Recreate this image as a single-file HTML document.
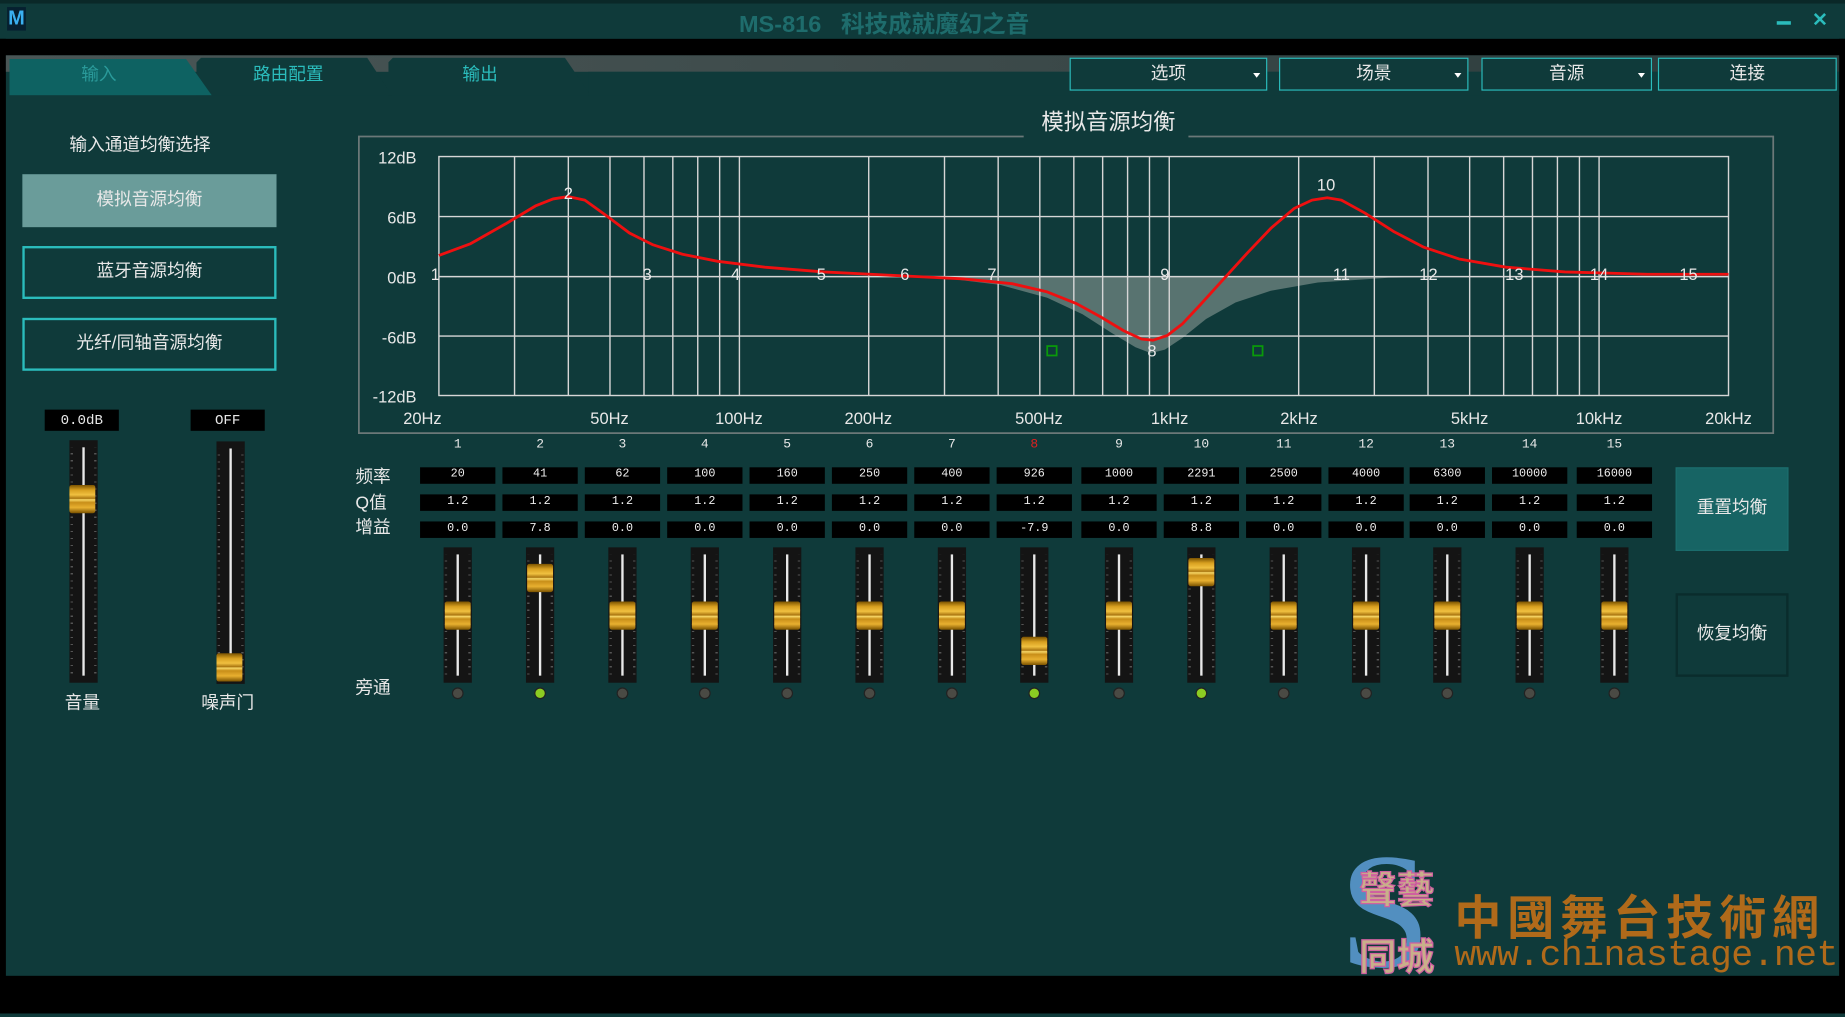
<!DOCTYPE html>
<html><head><meta charset="utf-8">
<style>
html,body{margin:0;padding:0;width:1845px;height:1017px;overflow:hidden;background:#0f3a3a;}
#s{position:absolute;left:0;top:0;width:1568px;height:864px;transform-origin:0 0;transform:scale(1.17666,1.1771);font-family:"Liberation Sans","Noto Sans CJK SC",sans-serif;color:#e8e8e8;}
.a{position:absolute;}
.t{position:absolute;white-space:nowrap;}
.btn{position:absolute;box-sizing:border-box;display:flex;align-items:center;justify-content:center;font-size:15px;padding-bottom:4px;}
.dd{position:absolute;box-sizing:border-box;border:1px solid #2bbcbc;background:#0f3a3a;font-size:15px;display:flex;align-items:center;justify-content:center;top:49px;height:28px;padding-bottom:4px;}
.dd i{position:absolute;right:5px;top:12px;width:0;height:0;border-left:3px solid transparent;border-right:3px solid transparent;border-top:4px solid #fff;}
.col{position:absolute;top:372px;width:70px;height:225px;}
.num{position:absolute;top:0px;width:70px;text-align:center;font:11px "Liberation Mono",monospace;color:#e8e8e8;}
.bx{position:absolute;left:3px;width:64px;height:14px;background:#000;font:10px/14px "Liberation Mono",monospace;text-align:center;color:#eee;}
.tr{position:absolute;left:23px;top:93px;width:24px;height:115px;background:#141414;}
.tr::before,.tr::after{content:"";position:absolute;top:6px;bottom:6px;width:2px;background:repeating-linear-gradient(#141414 0 5px,#555 5px 6px);}
.tr::before{left:1px}.tr::after{right:1px}
.ln{position:absolute;left:11px;top:6px;width:2px;bottom:6px;background:#e8e8e8;}
.kn{position:absolute;left:24px;width:22px;height:24px;border-radius:2px;background:linear-gradient(#7a5200 0%,#d8a020 18%,#f0c040 35%,#a87410 48%,#f8d868 52%,#c88e18 62%,#e8b030 80%,#7a5200 100%);}
.led{position:absolute;left:30px;top:212px;width:10px;height:10px;box-sizing:border-box;border:1px solid #222;border-radius:50%;background:#4a4a44;}
.led.on{background:#8ccc22;}
</style></head><body>
<div id="s">
<div class="a" style="left:0;top:0;width:1568px;height:3px;background:#0a2828"></div>
<div class="a" style="left:0;top:3px;width:1568px;height:30px;background:#0f3a3a"></div>
<div class="t" style="left:6px;top:6px;width:16px;height:20px;background:#062030;color:#3ab0f0;font:bold 17px/20px 'Liberation Sans';text-align:center">M</div>
<div class="t" style="left:628px;top:4px;font-size:20px;font-weight:bold;color:#1e6c6c">MS-816&nbsp;&nbsp;&nbsp;科技成就魔幻之音</div>
<div class="a" style="left:1510px;top:18px;width:12px;height:3px;background:#2bbcbc"></div>
<div class="t" style="left:1540px;top:7px;font-size:16px;font-weight:bold;color:#2bbcbc">✕</div>
<div class="a" style="left:0;top:33px;width:1568px;height:14px;background:#000"></div>
<div class="a" style="left:0;top:33px;width:5px;height:831px;background:#000"></div>
<div class="a" style="left:1563px;top:33px;width:5px;height:831px;background:#000"></div>
<div class="a" style="left:5px;top:47px;width:1558px;height:14px;background:linear-gradient(90deg,#4a5656,#3a4848 60%,#2a3a3a)"></div>
<div class="a" style="left:167px;top:49px;width:166px;height:32px;background:#0f3a3a;clip-path:polygon(4px 0,145px 0,166px 32px,0 32px,0 4px)"></div>
<div class="a" style="left:330px;top:49px;width:172px;height:32px;background:#0f3a3a;clip-path:polygon(4px 0,150px 0,172px 32px,0 32px,0 4px)"></div>
<div class="a" style="left:8px;top:50px;width:172px;height:31px;background:#0e6262;clip-path:polygon(0 0,150px 0,172px 31px,0 31px)"></div>
<div class="a" style="left:500px;top:61px;width:1063px;height:20px;background:#0f3a3a"></div>
<div class="t" style="left:69px;top:52px;font-size:15px;color:#2a9a9a">输入</div>
<div class="t" style="left:215px;top:52px;font-size:15px;color:#2bbcbc">路由配置</div>
<div class="t" style="left:393px;top:52px;font-size:15px;color:#2bbcbc">输出</div>
<div class="dd" style="left:909px;width:168px">选项<i></i></div>
<div class="dd" style="left:1087px;width:161px">场景<i></i></div>
<div class="dd" style="left:1259px;width:145px">音源<i></i></div>
<div class="dd" style="left:1409px;width:152px">连接</div>
<div class="t" style="left:59px;top:112px;font-size:15px">输入通道均衡选择</div>
<div class="btn" style="left:19px;top:148px;width:216px;height:45px;background:#6a9c9a">模拟音源均衡</div>
<div class="btn" style="left:19px;top:209px;width:216px;height:45px;border:2px solid #2bbcbc">蓝牙音源均衡</div>
<div class="btn" style="left:19px;top:270px;width:216px;height:45px;border:2px solid #2bbcbc">光纤/同轴音源均衡</div>
<div class="t" style="left:38px;top:348px;width:63px;height:18px;background:#000;font:12px/18px 'Liberation Mono',monospace;text-align:center">0.0dB</div>
<div class="t" style="left:162px;top:348px;width:63px;height:18px;background:#000;font:12px/18px 'Liberation Mono',monospace;text-align:center">OFF</div>
<div class="tr" style="left:59px;top:374px;height:206px"><div class="ln"></div></div>
<div class="kn" style="left:59px;top:412px"></div>
<div class="tr" style="left:184px;top:375px;height:206px"><div class="ln"></div></div>
<div class="kn" style="left:184px;top:555px"></div>
<div class="t" style="left:55px;top:586px;font-size:15px">音量</div>
<div class="t" style="left:171px;top:586px;font-size:15px">噪声门</div>
<svg class="a" style="left:0;top:0" width="1568" height="864" viewBox="0 0 1568 864">
<path d="M870,116 H305 V368 H1507 V116 H1010" fill="none" stroke="#6b7878" stroke-width="1.5"/>
<path d="M740,235 L800,236 850,242 890,253 920,267 945,283 965,295 978,300 990,297 1005,287 1025,271 1050,257 1080,247 1120,240 1180,236 1230,235 Z" fill="#587370"/>
<g stroke="#d6d6d6" stroke-width="1.2" fill="none">
<rect x="373" y="133" width="1096" height="203"/>
<path d="M373,184H1469M373,235H1469M373,285.5H1469"/>
<path d="M437.3,133V336M483,133V336M518.4,133V336M547.3,133V336M571.8,133V336M593,133V336M611.6,133V336M628.4,133V336M738.3,133V336M802.7,133V336M848.3,133V336M883.7,133V336M912.6,133V336M937.1,133V336M958.3,133V336M976.9,133V336M993.7,133V336M1103.7,133V336M1168,133V336M1213.6,133V336M1249,133V336M1277.9,133V336M1302.4,133V336M1323.6,133V336M1342.3,133V336M1359,133V336"/>
</g>
<rect x="890" y="294" width="8" height="8" fill="none" stroke="#0a9a0a" stroke-width="1.5"/>
<rect x="1065" y="294" width="8" height="8" fill="none" stroke="#0a9a0a" stroke-width="1.5"/>
<polyline fill="none" stroke="#ee1010" stroke-width="2.4" stroke-linejoin="round" points="373,217 400,207 430,190 455,175 470,169 483,167 497,170 515,183 535,198 555,208 580,216 610,222 650,227 700,231 740,233 780,235 820,237 860,241 890,248 915,258 935,269 955,281 970,288 980,289 992,285 1005,275 1020,259 1040,237 1060,215 1080,194 1100,177 1115,170 1128,168 1140,170 1160,181 1185,197 1210,210 1240,220 1280,227 1330,231 1400,233 1469,233"/>
<g font-family="Liberation Sans" font-size="14" fill="#e8e8e8" text-anchor="middle">
<text x="370" y="238">1</text><text x="483" y="169">2</text><text x="550" y="238">3</text><text x="625" y="238">4</text><text x="698" y="238">5</text><text x="769" y="238">6</text><text x="843" y="238">7</text><text x="979" y="303">8</text><text x="990" y="238">9</text><text x="1127" y="162">10</text><text x="1140" y="238">11</text><text x="1214" y="238">12</text><text x="1287" y="238">13</text><text x="1359" y="238">14</text><text x="1435" y="238">15</text>
</g>
<g font-family="Liberation Sans" font-size="14" fill="#e8e8e8" text-anchor="end">
<text x="354" y="139">12dB</text><text x="354" y="190">6dB</text><text x="354" y="241">0dB</text><text x="354" y="292">-6dB</text><text x="354" y="342">-12dB</text>
</g>
<g font-family="Liberation Sans" font-size="14" fill="#e8e8e8" text-anchor="middle">
<text x="359" y="360">20Hz</text><text x="518" y="360">50Hz</text><text x="628" y="360">100Hz</text><text x="738" y="360">200Hz</text><text x="883" y="360">500Hz</text><text x="994" y="360">1kHz</text><text x="1104" y="360">2kHz</text><text x="1249" y="360">5kHz</text><text x="1359" y="360">10kHz</text><text x="1469" y="360">20kHz</text>
</g>
<text x="942" y="110" font-family="Liberation Sans,Noto Sans CJK SC" font-size="19" fill="#e8e8e8" text-anchor="middle">模拟音源均衡</text>
</svg>
<div class="t" style="left:302px;top:394px;font-size:15px">频率</div>
<div class="t" style="left:302px;top:416px;font-size:15px">Q值</div>
<div class="t" style="left:302px;top:437px;font-size:15px">增益</div>
<div class="t" style="left:302px;top:573px;font-size:15px">旁通</div>

<div class="col" style="left:354px"><div class="num">1</div><div class="bx" style="top:25px">20</div><div class="bx" style="top:48px">1.2</div><div class="bx" style="top:71px">0.0</div><div class="tr"><div class="ln"></div></div><div class="kn" style="top:139px"></div><div class="led"></div></div>
<div class="col" style="left:424px"><div class="num">2</div><div class="bx" style="top:25px">41</div><div class="bx" style="top:48px">1.2</div><div class="bx" style="top:71px">7.8</div><div class="tr"><div class="ln"></div></div><div class="kn" style="top:107px"></div><div class="led on"></div></div>
<div class="col" style="left:494px"><div class="num">3</div><div class="bx" style="top:25px">62</div><div class="bx" style="top:48px">1.2</div><div class="bx" style="top:71px">0.0</div><div class="tr"><div class="ln"></div></div><div class="kn" style="top:139px"></div><div class="led"></div></div>
<div class="col" style="left:564px"><div class="num">4</div><div class="bx" style="top:25px">100</div><div class="bx" style="top:48px">1.2</div><div class="bx" style="top:71px">0.0</div><div class="tr"><div class="ln"></div></div><div class="kn" style="top:139px"></div><div class="led"></div></div>
<div class="col" style="left:634px"><div class="num">5</div><div class="bx" style="top:25px">160</div><div class="bx" style="top:48px">1.2</div><div class="bx" style="top:71px">0.0</div><div class="tr"><div class="ln"></div></div><div class="kn" style="top:139px"></div><div class="led"></div></div>
<div class="col" style="left:704px"><div class="num">6</div><div class="bx" style="top:25px">250</div><div class="bx" style="top:48px">1.2</div><div class="bx" style="top:71px">0.0</div><div class="tr"><div class="ln"></div></div><div class="kn" style="top:139px"></div><div class="led"></div></div>
<div class="col" style="left:774px"><div class="num">7</div><div class="bx" style="top:25px">400</div><div class="bx" style="top:48px">1.2</div><div class="bx" style="top:71px">0.0</div><div class="tr"><div class="ln"></div></div><div class="kn" style="top:139px"></div><div class="led"></div></div>
<div class="col" style="left:844px"><div class="num" style="color:#e02020">8</div><div class="bx" style="top:25px">926</div><div class="bx" style="top:48px">1.2</div><div class="bx" style="top:71px">-7.9</div><div class="tr"><div class="ln"></div></div><div class="kn" style="top:169px"></div><div class="led on"></div></div>
<div class="col" style="left:916px"><div class="num">9</div><div class="bx" style="top:25px">1000</div><div class="bx" style="top:48px">1.2</div><div class="bx" style="top:71px">0.0</div><div class="tr"><div class="ln"></div></div><div class="kn" style="top:139px"></div><div class="led"></div></div>
<div class="col" style="left:986px"><div class="num">10</div><div class="bx" style="top:25px">2291</div><div class="bx" style="top:48px">1.2</div><div class="bx" style="top:71px">8.8</div><div class="tr"><div class="ln"></div></div><div class="kn" style="top:102px"></div><div class="led on"></div></div>
<div class="col" style="left:1056px"><div class="num">11</div><div class="bx" style="top:25px">2500</div><div class="bx" style="top:48px">1.2</div><div class="bx" style="top:71px">0.0</div><div class="tr"><div class="ln"></div></div><div class="kn" style="top:139px"></div><div class="led"></div></div>
<div class="col" style="left:1126px"><div class="num">12</div><div class="bx" style="top:25px">4000</div><div class="bx" style="top:48px">1.2</div><div class="bx" style="top:71px">0.0</div><div class="tr"><div class="ln"></div></div><div class="kn" style="top:139px"></div><div class="led"></div></div>
<div class="col" style="left:1195px"><div class="num">13</div><div class="bx" style="top:25px">6300</div><div class="bx" style="top:48px">1.2</div><div class="bx" style="top:71px">0.0</div><div class="tr"><div class="ln"></div></div><div class="kn" style="top:139px"></div><div class="led"></div></div>
<div class="col" style="left:1265px"><div class="num">14</div><div class="bx" style="top:25px">10000</div><div class="bx" style="top:48px">1.2</div><div class="bx" style="top:71px">0.0</div><div class="tr"><div class="ln"></div></div><div class="kn" style="top:139px"></div><div class="led"></div></div>
<div class="col" style="left:1337px"><div class="num">15</div><div class="bx" style="top:25px">16000</div><div class="bx" style="top:48px">1.2</div><div class="bx" style="top:71px">0.0</div><div class="tr"><div class="ln"></div></div><div class="kn" style="top:139px"></div><div class="led"></div></div>

<div class="btn" style="left:1424px;top:397px;width:96px;height:71px;background:#176464;border:1px solid #1c6e6e">重置均衡</div>
<div class="btn" style="left:1424px;top:504px;width:96px;height:71px;border:2px solid #0a2c2c">恢复均衡</div>

<div class="t" style="left:1138px;top:700px;font:140px/150px 'Liberation Serif',serif;color:#5a9ad0;opacity:.9">S</div>
<div class="t" style="left:1155px;top:735px;font:bold 32px/38px 'Noto Sans CJK TC',sans-serif;color:#c8b08a;-webkit-text-stroke:1px #d060a0">聲藝</div>
<div class="t" style="left:1155px;top:792px;font:bold 32px/38px 'Noto Sans CJK TC',sans-serif;color:#c8b08a;-webkit-text-stroke:1px #d060a0">同城</div>
<div class="t" style="left:1236px;top:755px;font:bold 40px/44px 'Noto Sans CJK TC',sans-serif;color:#b06a1a;letter-spacing:5px">中國舞台技術網</div>
<div class="t" style="left:1236px;top:797px;font:31px/32px 'Liberation Mono',monospace;color:#b06a1a;letter-spacing:-0.5px">www.chinastage.net</div>

<div class="a" style="left:0;top:829px;width:1568px;height:32px;background:#000"></div>
<div class="a" style="left:0;top:861px;width:1568px;height:3px;background:#0f3a3a"></div>
</div>
</body></html>
